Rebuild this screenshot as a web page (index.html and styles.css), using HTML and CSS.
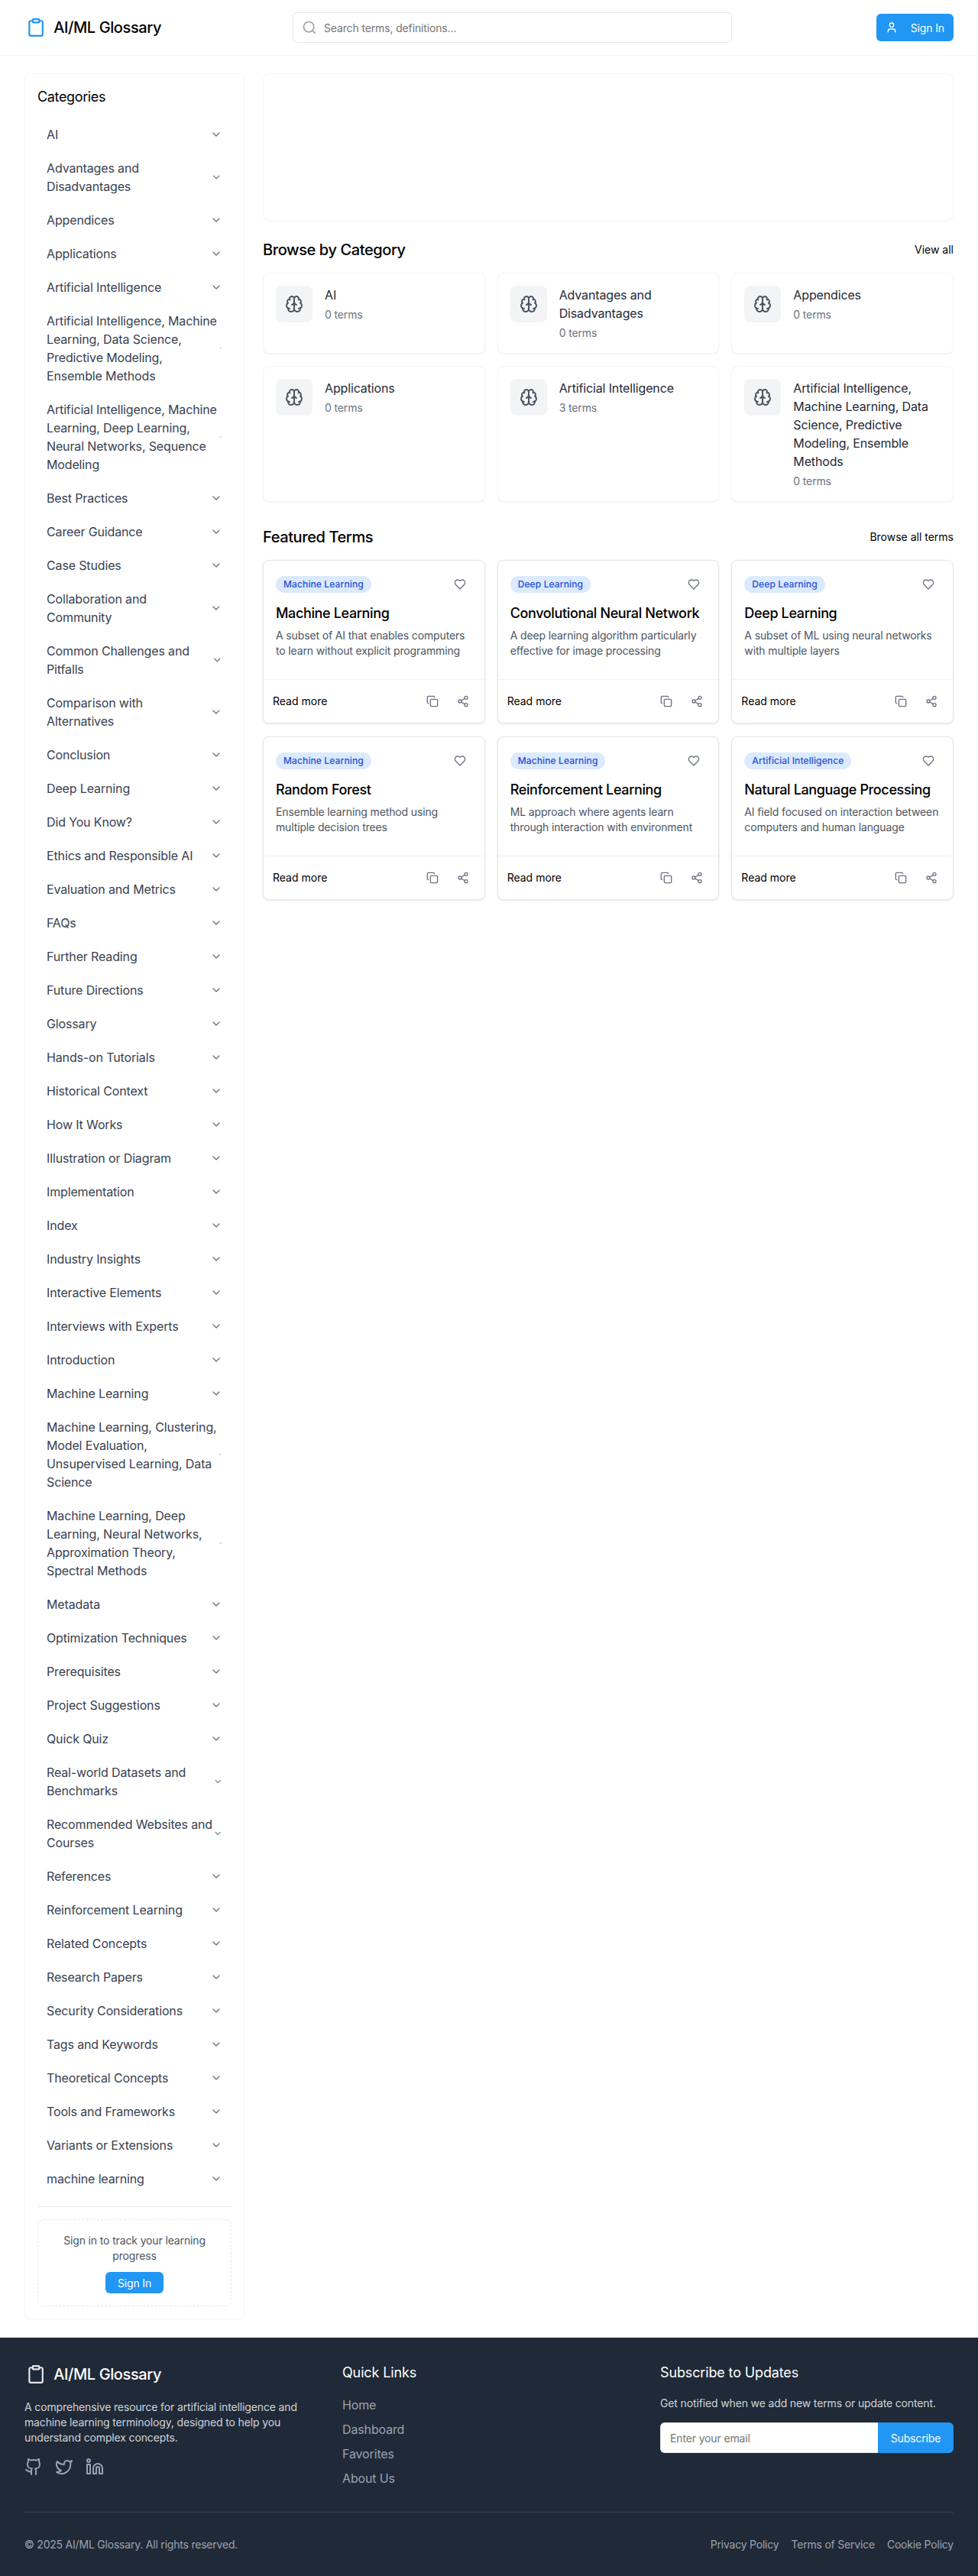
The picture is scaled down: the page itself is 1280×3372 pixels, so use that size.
FILE: index.html
```html
<!DOCTYPE html>
<html lang="en">
<head>
  <meta charset="UTF-8">
  <meta name="viewport" content="width=device-width, initial-scale=1.0">
  <title>AI/ML Glossary</title>
  <link rel="stylesheet" href="styles.css">
</head>
<body>
  <!-- Icon sprites -->
  <svg class="sprites" xmlns="http://www.w3.org/2000/svg">
    <symbol id="i-clipboard" viewBox="0 0 24 24"><rect x="8" y="2" width="8" height="4" rx="1"/><path d="M16 4h2a2 2 0 0 1 2 2v14a2 2 0 0 1-2 2H6a2 2 0 0 1-2-2V6a2 2 0 0 1 2-2h2"/></symbol>
    <symbol id="i-search" viewBox="0 0 24 24"><circle cx="11" cy="11" r="8"/><path d="m21 21-4.3-4.3"/></symbol>
    <symbol id="i-user" viewBox="0 0 24 24"><path d="M19 21v-2a4 4 0 0 0-4-4H9a4 4 0 0 0-4 4v2"/><circle cx="12" cy="7" r="4"/></symbol>
    <symbol id="i-chevron" viewBox="0 0 24 24"><path d="m6 9 6 6 6-6"/></symbol>
    <symbol id="i-brain" viewBox="0 0 24 24"><path d="M12 5a3 3 0 1 0-5.997.125 4 4 0 0 0-2.526 5.77 4 4 0 0 0 .556 6.588A4 4 0 1 0 12 18Z"/><path d="M12 5a3 3 0 1 1 5.997.125 4 4 0 0 1 2.526 5.77 4 4 0 0 1-.556 6.588A4 4 0 1 1 12 18Z"/><path d="M15 13a4.5 4.5 0 0 1-3-4 4.5 4.5 0 0 1-3 4"/><path d="M17.599 6.5a3 3 0 0 0 .399-1.375"/><path d="M6.003 5.125A3 3 0 0 0 6.401 6.5"/><path d="M3.477 10.896a4 4 0 0 1 .585-.396"/><path d="M19.938 10.5a4 4 0 0 1 .585.396"/><path d="M6 18a4 4 0 0 1-1.967-.516"/><path d="M19.967 17.484A4 4 0 0 1 18 18"/></symbol>
    <symbol id="i-heart" viewBox="0 0 24 24"><path d="M19 14c1.49-1.46 3-3.21 3-5.5A5.5 5.5 0 0 0 16.5 3c-1.76 0-3 .5-4.5 2-1.5-1.5-2.74-2-4.5-2A5.5 5.5 0 0 0 2 8.5c0 2.3 1.5 4.05 3 5.5l7 7Z"/></symbol>
    <symbol id="i-copy" viewBox="0 0 24 24"><rect x="8" y="8" width="14" height="14" rx="2"/><path d="M4 16c-1.1 0-2-.9-2-2V4c0-1.1.9-2 2-2h10c1.1 0 2 .9 2 2"/></symbol>
    <symbol id="i-share" viewBox="0 0 24 24"><circle cx="18" cy="5" r="3"/><circle cx="6" cy="12" r="3"/><circle cx="18" cy="19" r="3"/><path d="m8.59 13.51 6.83 3.98"/><path d="m15.41 6.51-6.82 3.98"/></symbol>
    <symbol id="i-github" viewBox="0 0 24 24"><path d="M15 22v-4a4.8 4.8 0 0 0-1-3.5c3 0 6-2 6-5.5.08-1.25-.27-2.48-1-3.5.28-1.15.28-2.35 0-3.5 0 0-1 0-3 1.5-2.64-.5-5.36-.5-8 0C6 2 5 2 5 2c-.3 1.15-.3 2.35 0 3.5A5.403 5.403 0 0 0 4 9c0 3.5 3 5.5 6 5.5-.39.49-.68 1.05-.85 1.65-.17.6-.22 1.23-.15 1.85v4"/><path d="M9 18c-4.51 2-5-2-7-2"/></symbol>
    <symbol id="i-twitter" viewBox="0 0 24 24"><path d="M22 4s-.7 2.1-2 3.4c1.6 10-9.4 17.3-18 11.6 2.2.1 4.4-.6 6-2C3 15.5.5 9.6 3 5c2.2 2.6 5.6 4.1 9 4-.9-4.2 4-6.6 7-3.8 1.1 0 3-1.2 3-1.2z"/></symbol>
    <symbol id="i-linkedin" viewBox="0 0 24 24"><path d="M16 8a6 6 0 0 1 6 6v7h-4v-7a2 2 0 0 0-2-2 2 2 0 0 0-2 2v7h-4v-7a6 6 0 0 1 6-6z"/><rect x="2" y="9" width="4" height="12"/><circle cx="4" cy="4" r="2"/></symbol>
  </svg>

  <header class="site-header">
    <a class="logo" href="#">
      <svg class="icon logo-icon"><use href="#i-clipboard"/></svg>
      <span>AI/ML Glossary</span>
    </a>
    <div class="search">
      <svg class="icon search-icon"><use href="#i-search"/></svg>
      <input type="text" placeholder="Search terms, definitions...">
    </div>
    <button class="signin-btn">
      <svg class="icon icon-16"><use href="#i-user"/></svg>
      <span>Sign In</span>
    </button>
  </header>

  <div class="page">
    <aside class="sidebar">
      <h2 class="sidebar-title">Categories</h2>
      <ul class="cat-list">
        <li class="cat-row"><span>AI</span><svg class="icon chevron"><use href="#i-chevron"/></svg></li>
        <li class="cat-row"><span>Advantages and Disadvantages</span><svg class="icon chevron"><use href="#i-chevron"/></svg></li>
        <li class="cat-row"><span>Appendices</span><svg class="icon chevron"><use href="#i-chevron"/></svg></li>
        <li class="cat-row"><span>Applications</span><svg class="icon chevron"><use href="#i-chevron"/></svg></li>
        <li class="cat-row"><span>Artificial Intelligence</span><svg class="icon chevron"><use href="#i-chevron"/></svg></li>
        <li class="cat-row"><span>Artificial Intelligence, Machine Learning, Data Science, Predictive Modeling, Ensemble Methods</span><svg class="icon chevron"><use href="#i-chevron"/></svg></li>
        <li class="cat-row"><span>Artificial Intelligence, Machine Learning, Deep Learning, Neural Networks, Sequence Modeling</span><svg class="icon chevron"><use href="#i-chevron"/></svg></li>
        <li class="cat-row"><span>Best Practices</span><svg class="icon chevron"><use href="#i-chevron"/></svg></li>
        <li class="cat-row"><span>Career Guidance</span><svg class="icon chevron"><use href="#i-chevron"/></svg></li>
        <li class="cat-row"><span>Case Studies</span><svg class="icon chevron"><use href="#i-chevron"/></svg></li>
        <li class="cat-row"><span>Collaboration and Community</span><svg class="icon chevron"><use href="#i-chevron"/></svg></li>
        <li class="cat-row"><span>Common Challenges and Pitfalls</span><svg class="icon chevron"><use href="#i-chevron"/></svg></li>
        <li class="cat-row"><span>Comparison with Alternatives</span><svg class="icon chevron"><use href="#i-chevron"/></svg></li>
        <li class="cat-row"><span>Conclusion</span><svg class="icon chevron"><use href="#i-chevron"/></svg></li>
        <li class="cat-row"><span>Deep Learning</span><svg class="icon chevron"><use href="#i-chevron"/></svg></li>
        <li class="cat-row"><span>Did You Know?</span><svg class="icon chevron"><use href="#i-chevron"/></svg></li>
        <li class="cat-row"><span>Ethics and Responsible AI</span><svg class="icon chevron"><use href="#i-chevron"/></svg></li>
        <li class="cat-row"><span>Evaluation and Metrics</span><svg class="icon chevron"><use href="#i-chevron"/></svg></li>
        <li class="cat-row"><span>FAQs</span><svg class="icon chevron"><use href="#i-chevron"/></svg></li>
        <li class="cat-row"><span>Further Reading</span><svg class="icon chevron"><use href="#i-chevron"/></svg></li>
        <li class="cat-row"><span>Future Directions</span><svg class="icon chevron"><use href="#i-chevron"/></svg></li>
        <li class="cat-row"><span>Glossary</span><svg class="icon chevron"><use href="#i-chevron"/></svg></li>
        <li class="cat-row"><span>Hands-on Tutorials</span><svg class="icon chevron"><use href="#i-chevron"/></svg></li>
        <li class="cat-row"><span>Historical Context</span><svg class="icon chevron"><use href="#i-chevron"/></svg></li>
        <li class="cat-row"><span>How It Works</span><svg class="icon chevron"><use href="#i-chevron"/></svg></li>
        <li class="cat-row"><span>Illustration or Diagram</span><svg class="icon chevron"><use href="#i-chevron"/></svg></li>
        <li class="cat-row"><span>Implementation</span><svg class="icon chevron"><use href="#i-chevron"/></svg></li>
        <li class="cat-row"><span>Index</span><svg class="icon chevron"><use href="#i-chevron"/></svg></li>
        <li class="cat-row"><span>Industry Insights</span><svg class="icon chevron"><use href="#i-chevron"/></svg></li>
        <li class="cat-row"><span>Interactive Elements</span><svg class="icon chevron"><use href="#i-chevron"/></svg></li>
        <li class="cat-row"><span>Interviews with Experts</span><svg class="icon chevron"><use href="#i-chevron"/></svg></li>
        <li class="cat-row"><span>Introduction</span><svg class="icon chevron"><use href="#i-chevron"/></svg></li>
        <li class="cat-row"><span>Machine Learning</span><svg class="icon chevron"><use href="#i-chevron"/></svg></li>
        <li class="cat-row"><span>Machine Learning, Clustering, Model Evaluation, Unsupervised Learning, Data Science</span><svg class="icon chevron"><use href="#i-chevron"/></svg></li>
        <li class="cat-row"><span>Machine Learning, Deep Learning, Neural Networks, Approximation Theory, Spectral Methods</span><svg class="icon chevron"><use href="#i-chevron"/></svg></li>
        <li class="cat-row"><span>Metadata</span><svg class="icon chevron"><use href="#i-chevron"/></svg></li>
        <li class="cat-row"><span>Optimization Techniques</span><svg class="icon chevron"><use href="#i-chevron"/></svg></li>
        <li class="cat-row"><span>Prerequisites</span><svg class="icon chevron"><use href="#i-chevron"/></svg></li>
        <li class="cat-row"><span>Project Suggestions</span><svg class="icon chevron"><use href="#i-chevron"/></svg></li>
        <li class="cat-row"><span>Quick Quiz</span><svg class="icon chevron"><use href="#i-chevron"/></svg></li>
        <li class="cat-row"><span>Real-world Datasets and Benchmarks</span><svg class="icon chevron"><use href="#i-chevron"/></svg></li>
        <li class="cat-row"><span>Recommended Websites and Courses</span><svg class="icon chevron"><use href="#i-chevron"/></svg></li>
        <li class="cat-row"><span>References</span><svg class="icon chevron"><use href="#i-chevron"/></svg></li>
        <li class="cat-row"><span>Reinforcement Learning</span><svg class="icon chevron"><use href="#i-chevron"/></svg></li>
        <li class="cat-row"><span>Related Concepts</span><svg class="icon chevron"><use href="#i-chevron"/></svg></li>
        <li class="cat-row"><span>Research Papers</span><svg class="icon chevron"><use href="#i-chevron"/></svg></li>
        <li class="cat-row"><span>Security Considerations</span><svg class="icon chevron"><use href="#i-chevron"/></svg></li>
        <li class="cat-row"><span>Tags and Keywords</span><svg class="icon chevron"><use href="#i-chevron"/></svg></li>
        <li class="cat-row"><span>Theoretical Concepts</span><svg class="icon chevron"><use href="#i-chevron"/></svg></li>
        <li class="cat-row"><span>Tools and Frameworks</span><svg class="icon chevron"><use href="#i-chevron"/></svg></li>
        <li class="cat-row"><span>Variants or Extensions</span><svg class="icon chevron"><use href="#i-chevron"/></svg></li>
        <li class="cat-row"><span>machine learning</span><svg class="icon chevron"><use href="#i-chevron"/></svg></li>
      </ul>
      <div class="progress-box">
        <p>Sign in to track your learning progress</p>
        <button class="small-btn">Sign In</button>
      </div>
    </aside>

    <main class="content">
      <div class="hero-card"></div>

      <section class="section">
        <div class="section-head">
          <h2>Browse by Category</h2>
          <a href="#">View all</a>
        </div>
        <div class="card-grid">
          <div class="cat-card">
            <div class="cat-icon"><svg class="icon icon-24"><use href="#i-brain"/></svg></div>
            <div><h3>AI</h3><p>0 terms</p></div>
          </div>
          <div class="cat-card">
            <div class="cat-icon"><svg class="icon icon-24"><use href="#i-brain"/></svg></div>
            <div><h3>Advantages and Disadvantages</h3><p>0 terms</p></div>
          </div>
          <div class="cat-card">
            <div class="cat-icon"><svg class="icon icon-24"><use href="#i-brain"/></svg></div>
            <div><h3>Appendices</h3><p>0 terms</p></div>
          </div>
          <div class="cat-card">
            <div class="cat-icon"><svg class="icon icon-24"><use href="#i-brain"/></svg></div>
            <div><h3>Applications</h3><p>0 terms</p></div>
          </div>
          <div class="cat-card">
            <div class="cat-icon"><svg class="icon icon-24"><use href="#i-brain"/></svg></div>
            <div><h3>Artificial Intelligence</h3><p>3 terms</p></div>
          </div>
          <div class="cat-card">
            <div class="cat-icon"><svg class="icon icon-24"><use href="#i-brain"/></svg></div>
            <div><h3>Artificial Intelligence, Machine Learning, Data Science, Predictive Modeling, Ensemble Methods</h3><p>0 terms</p></div>
          </div>
        </div>
      </section>

      <section class="section">
        <div class="section-head">
          <h2>Featured Terms</h2>
          <a href="#">Browse all terms</a>
        </div>
        <div class="card-grid term-grid">
          <article class="term-card">
            <div class="term-body">
              <div class="term-top"><span class="badge">Machine Learning</span><svg class="icon icon-16 muted"><use href="#i-heart"/></svg></div>
              <h3>Machine Learning</h3>
              <p>A subset of AI that enables computers to learn without explicit programming</p>
            </div>
            <div class="term-foot">
              <a href="#">Read more</a>
              <div class="term-actions">
                <button class="icon-btn"><svg class="icon icon-16"><use href="#i-copy"/></svg></button>
                <button class="icon-btn"><svg class="icon icon-16"><use href="#i-share"/></svg></button>
              </div>
            </div>
          </article>
          <article class="term-card">
            <div class="term-body">
              <div class="term-top"><span class="badge">Deep Learning</span><svg class="icon icon-16 muted"><use href="#i-heart"/></svg></div>
              <h3>Convolutional Neural Network</h3>
              <p>A deep learning algorithm particularly effective for image processing</p>
            </div>
            <div class="term-foot">
              <a href="#">Read more</a>
              <div class="term-actions">
                <button class="icon-btn"><svg class="icon icon-16"><use href="#i-copy"/></svg></button>
                <button class="icon-btn"><svg class="icon icon-16"><use href="#i-share"/></svg></button>
              </div>
            </div>
          </article>
          <article class="term-card">
            <div class="term-body">
              <div class="term-top"><span class="badge">Deep Learning</span><svg class="icon icon-16 muted"><use href="#i-heart"/></svg></div>
              <h3>Deep Learning</h3>
              <p>A subset of ML using neural networks with multiple layers</p>
            </div>
            <div class="term-foot">
              <a href="#">Read more</a>
              <div class="term-actions">
                <button class="icon-btn"><svg class="icon icon-16"><use href="#i-copy"/></svg></button>
                <button class="icon-btn"><svg class="icon icon-16"><use href="#i-share"/></svg></button>
              </div>
            </div>
          </article>
          <article class="term-card">
            <div class="term-body">
              <div class="term-top"><span class="badge">Machine Learning</span><svg class="icon icon-16 muted"><use href="#i-heart"/></svg></div>
              <h3>Random Forest</h3>
              <p>Ensemble learning method using multiple decision trees</p>
            </div>
            <div class="term-foot">
              <a href="#">Read more</a>
              <div class="term-actions">
                <button class="icon-btn"><svg class="icon icon-16"><use href="#i-copy"/></svg></button>
                <button class="icon-btn"><svg class="icon icon-16"><use href="#i-share"/></svg></button>
              </div>
            </div>
          </article>
          <article class="term-card">
            <div class="term-body">
              <div class="term-top"><span class="badge">Machine Learning</span><svg class="icon icon-16 muted"><use href="#i-heart"/></svg></div>
              <h3>Reinforcement Learning</h3>
              <p>ML approach where agents learn through interaction with environment</p>
            </div>
            <div class="term-foot">
              <a href="#">Read more</a>
              <div class="term-actions">
                <button class="icon-btn"><svg class="icon icon-16"><use href="#i-copy"/></svg></button>
                <button class="icon-btn"><svg class="icon icon-16"><use href="#i-share"/></svg></button>
              </div>
            </div>
          </article>
          <article class="term-card">
            <div class="term-body">
              <div class="term-top"><span class="badge">Artificial Intelligence</span><svg class="icon icon-16 muted"><use href="#i-heart"/></svg></div>
              <h3>Natural Language Processing</h3>
              <p>AI field focused on interaction between computers and human language</p>
            </div>
            <div class="term-foot">
              <a href="#">Read more</a>
              <div class="term-actions">
                <button class="icon-btn"><svg class="icon icon-16"><use href="#i-copy"/></svg></button>
                <button class="icon-btn"><svg class="icon icon-16"><use href="#i-share"/></svg></button>
              </div>
            </div>
          </article>
        </div>
      </section>
    </main>
  </div>

  <footer class="site-footer">
    <div class="footer-grid">
      <div>
        <a class="logo footer-logo" href="#">
          <svg class="icon logo-icon"><use href="#i-clipboard"/></svg>
          <span>AI/ML Glossary</span>
        </a>
        <p class="footer-about">A comprehensive resource for artificial intelligence and machine learning terminology, designed to help you understand complex concepts.</p>
        <div class="socials">
          <a href="#"><svg class="icon icon-24"><use href="#i-github"/></svg></a>
          <a href="#"><svg class="icon icon-24"><use href="#i-twitter"/></svg></a>
          <a href="#"><svg class="icon icon-24"><use href="#i-linkedin"/></svg></a>
        </div>
      </div>
      <div>
        <h3 class="footer-title">Quick Links</h3>
        <ul class="footer-links">
          <li><a href="#">Home</a></li>
          <li><a href="#">Dashboard</a></li>
          <li><a href="#">Favorites</a></li>
          <li><a href="#">About Us</a></li>
        </ul>
      </div>
      <div>
        <h3 class="footer-title">Subscribe to Updates</h3>
        <p class="footer-note">Get notified when we add new terms or update content.</p>
        <form class="subscribe">
          <input type="email" placeholder="Enter your email">
          <button type="button">Subscribe</button>
        </form>
      </div>
    </div>
    <div class="footer-bottom">
      <p>&copy; 2025 AI/ML Glossary. All rights reserved.</p>
      <div class="legal">
        <a href="#">Privacy Policy</a>
        <a href="#">Terms of Service</a>
        <a href="#">Cookie Policy</a>
      </div>
    </div>
  </footer>
</body>
</html>
```

FILE: styles.css
```css
* {
  margin: 0;
  padding: 0;
  box-sizing: border-box;
}

body {
  font-family: 'Inter', 'Liberation Sans', sans-serif;
  font-size: 14px;
  line-height: 20px;
  letter-spacing: -0.01em;
  color: #111827;
  background-color: #fff;
}

a {
  color: inherit;
  text-decoration: none;
}

ul {
  list-style: none;
}

button, input {
  font-family: inherit;
  letter-spacing: inherit;
}

.sprites {
  display: none;
}

/* Icons */
.icon {
  fill: none;
  stroke: currentColor;
  stroke-width: 2;
  stroke-linecap: round;
  stroke-linejoin: round;
}

.icon-16 {
  width: 16px;
  height: 16px;
}

.icon-24 {
  width: 24px;
  height: 24px;
}

.muted {
  color: #6b7280;
}

/* Header */
.site-header {
  height: 72px;
  padding: 0 32px;
  display: flex;
  align-items: center;
  background-color: #fff;
  box-shadow: 0 1px 2px rgba(0, 0, 0, 0.05);
}

.logo {
  width: 179px;
  height: 32px;
  display: flex;
  align-items: center;
  gap: 10px;
  font-size: 20px;
  line-height: 28px;
  font-weight: 500;
  letter-spacing: -0.02em;
  white-space: nowrap;
  color: #000;
}

.logo-icon {
  width: 28px;
  height: 28px;
  margin-left: 2px;
  color: #2196f3;
}

.search {
  position: relative;
  width: 575px;
  height: 40px;
  margin-left: 172px;
}

.search-icon {
  position: absolute;
  left: 12px;
  top: 10px;
  width: 20px;
  height: 20px;
  color: #9ca3af;
}

.search input {
  width: 100%;
  height: 100%;
  padding: 0 12px 0 40px;
  font-size: 14px;
  border: 1px solid #e5e7eb;
  border-radius: 6px;
  outline: none;
}

.signin-btn {
  margin-left: auto;
  width: 101px;
  height: 36px;
  padding: 0 12px;
  display: flex;
  align-items: center;
  justify-content: space-between;
  font-size: 14px;
  font-weight: 400;
  color: #fff;
  background-color: #2196f3;
  border: none;
  border-radius: 6px;
}

/* Page layout */
.page {
  display: flex;
  align-items: flex-start;
  gap: 24px;
  padding: 24px 32px;
}

/* Sidebar */
.sidebar {
  width: 288px;
  flex-shrink: 0;
  padding: 16px;
  background-color: #fff;
  border: 1px solid #f7f7f7;
  border-radius: 8px;
  box-shadow: 0 1px 2px rgba(0, 0, 0, 0.03);
}

.sidebar-title {
  font-size: 18px;
  line-height: 28px;
  font-weight: 400;
  letter-spacing: -0.02em;
  color: #000;
  margin-bottom: 13px;
}

.cat-list {
  padding-bottom: 14px;
  border-bottom: 1px solid #e5e7eb;
}

.cat-row {
  display: flex;
  align-items: center;
  justify-content: space-between;
  padding: 10px 12px;
  font-size: 16px;
  line-height: 24px;
  color: #374151;
}

.chevron {
  width: 16px;
  height: 16px;
  color: #6b7280;
}

.progress-box {
  margin-top: 16px;
  padding: 17px 17px 16px;
  text-align: center;
  border: 1px dashed #e5e7eb;
  border-radius: 8px;
}

.progress-box p {
  color: #4b5563;
  margin-bottom: 11px;
}

.small-btn {
  width: 76px;
  height: 28px;
  font-size: 14px;
  color: #fff;
  background-color: #2196f3;
  border: none;
  border-radius: 6px;
}

/* Main content */
.content {
  flex: 1;
  min-width: 0;
}

.hero-card {
  height: 193px;
  margin-bottom: 24px;
  background-color: #fff;
  border: 1px solid #f7f7f7;
  border-radius: 8px;
  box-shadow: 0 1px 2px rgba(0, 0, 0, 0.03);
}

.section {
  margin-bottom: 32px;
}

.section-head {
  display: flex;
  align-items: center;
  justify-content: space-between;
  margin-bottom: 16px;
}

.section-head h2 {
  font-size: 20px;
  line-height: 28px;
  font-weight: 500;
  letter-spacing: -0.02em;
  color: #000;
}

.section-head a {
  letter-spacing: 0;
  color: #000;
}

.card-grid {
  display: grid;
  grid-template-columns: repeat(3, 1fr);
  gap: 16px;
}

.term-grid {
  row-gap: 17px;
}

/* Category cards */
.cat-card {
  display: flex;
  align-items: flex-start;
  gap: 16px;
  padding: 16px;
  background-color: #fff;
  border: 1px solid #f3f4f6;
  border-radius: 8px;
  box-shadow: 0 1px 2px rgba(0, 0, 0, 0.05);
}

.cat-icon {
  width: 48px;
  height: 48px;
  flex-shrink: 0;
  display: flex;
  align-items: center;
  justify-content: center;
  color: #4b5563;
  background-color: #f3f4f6;
  border-radius: 8px;
}

.cat-card h3 {
  font-size: 16px;
  line-height: 24px;
  font-weight: 400;
  color: #1f2937;
  margin-bottom: 4px;
}

.cat-card p {
  color: #6b7280;
}

/* Term cards */
.term-card {
  background-color: #fff;
  border: 1px solid #e5e7eb;
  border-radius: 8px;
  box-shadow: 0 1px 3px rgba(0, 0, 0, 0.1);
}

.term-body {
  padding: 20px 16px 27px;
}

.term-top {
  display: flex;
  align-items: center;
  justify-content: space-between;
  padding-right: 8px;
  margin-bottom: 13px;
}

.badge {
  padding: 0 10px;
  font-size: 12px;
  line-height: 22px;
  font-weight: 500;
  letter-spacing: 0.01em;
  color: #1d4ed8;
  background-color: #dbeafe;
  border-radius: 11px;
}

.term-body h3 {
  font-size: 18px;
  line-height: 28px;
  font-weight: 500;
  letter-spacing: -0.02em;
  color: #000;
  margin-bottom: 5px;
}

.term-body p {
  color: #4b5563;
}

.term-foot {
  display: flex;
  align-items: center;
  justify-content: space-between;
  padding: 8px 8px 8px 12px;
  border-top: 1px solid #f3f4f6;
}

.term-foot a {
  letter-spacing: 0;
  color: #000;
}

.term-actions {
  display: flex;
}

.icon-btn {
  width: 40px;
  height: 40px;
  display: flex;
  align-items: center;
  justify-content: center;
  color: #6b7280;
  background: none;
  border: none;
}

/* Footer */
.site-footer {
  padding: 32px 32px;
  color: #d1d5db;
  background-color: #1f2937;
}

.footer-grid {
  display: grid;
  grid-template-columns: repeat(3, 1fr);
  gap: 32px;
  padding-bottom: 32px;
  border-bottom: 1px solid #374151;
}

.footer-logo {
  color: #fff;
}

.footer-logo .logo-icon {
  color: #e5e7eb;
}

.footer-about {
  margin-top: 17px;
}

.socials {
  display: flex;
  gap: 16px;
  margin-top: 16px;
  color: #9ca3af;
}

.socials a {
  display: flex;
}

.footer-title {
  font-size: 18px;
  line-height: 28px;
  font-weight: 400;
  color: #fff;
  margin-bottom: 16px;
}

.footer-links {
  display: flex;
  flex-direction: column;
  gap: 8px;
  font-size: 16px;
  line-height: 24px;
  color: #9ca3af;
}

.footer-note {
  margin-bottom: 15px;
}

.subscribe {
  display: flex;
  height: 40px;
}

.subscribe input {
  flex: 1;
  min-width: 0;
  padding: 0 12px;
  font-size: 14px;
  border: 1px solid #e5e7eb;
  border-right: none;
  border-radius: 6px 0 0 6px;
  outline: none;
}

.subscribe button {
  width: 99px;
  font-size: 14px;
  font-weight: 400;
  color: #fff;
  background-color: #2196f3;
  border: none;
  border-radius: 0 6px 6px 0;
}

.footer-bottom {
  display: flex;
  align-items: center;
  justify-content: space-between;
  padding-top: 32px;
  letter-spacing: -0.015em;
  color: #9ca3af;
}

.legal {
  display: flex;
  gap: 16px;
}
```
